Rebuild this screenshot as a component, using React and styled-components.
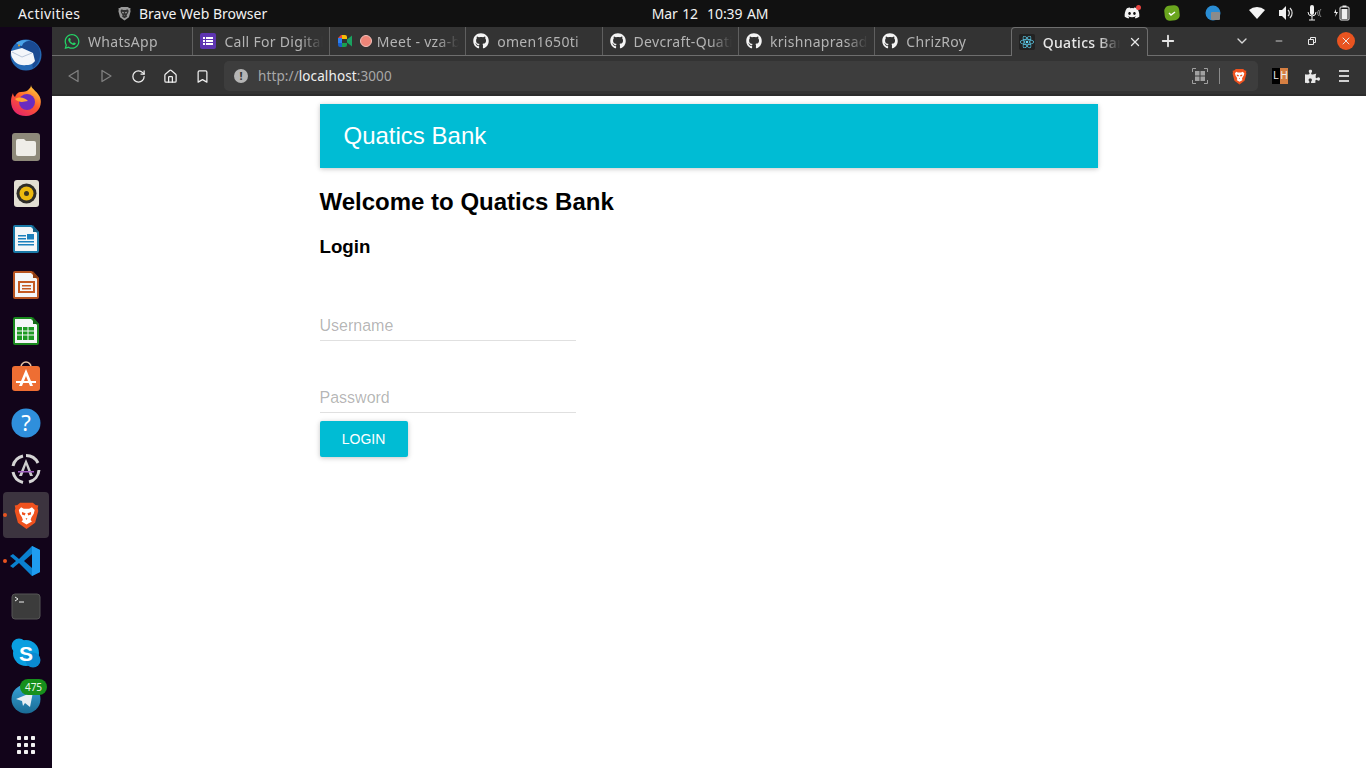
import React from "react";
import styled, { createGlobalStyle } from "styled-components";
import { FaGithub, FaWhatsapp, FaDiscord, FaReact, FaPuzzlePiece } from "react-icons/fa";
import { X, Plus, ChevronDown, Minus, RotateCw, Home, Bookmark } from "lucide-react";

const Global = createGlobalStyle`
  * { box-sizing: border-box; }
  html, body { margin: 0; padding: 0; height: 100%; overflow: hidden; background: #fff; }
  #root { height: 768px; }
`;
const uiFont = `"Noto Sans", "DejaVu Sans", sans-serif`;
const webFont = `"Liberation Sans", Arial, sans-serif`;

const Screen = styled.div`
  width: 1366px; height: 768px; display: grid; grid-template-rows: 27px 1fr; font-family: ${uiFont};
`;
const TopBar = styled.header`
  display: grid; grid-template-columns: 1fr auto 1fr; align-items: center; background: #111111; color: #f2f2f2;
  font-size: 14px; padding: 0 0 1px 18px;
`;
const TopLeft = styled.div`display: flex; align-items: center;`;
const Activities = styled.span`width: 99px; font-size: 14px; letter-spacing: 0.4px;`;
const AppName = styled.span`display: flex; align-items: center; gap: 7px; font-size: 14px;`;
const Clock = styled.div`font-size: 14px; letter-spacing: -0.1px; word-spacing: 1px; margin-left: 36px;`;
const Tray = styled.div`display: flex; align-items: center; justify-content: flex-end; height: 100%; padding-right: 16px;`;
const TraySlot = styled.span`
  position: relative; display: flex; justify-content: center; align-items: center;
  width: ${p => p.$w}px; margin-left: ${p => p.$ml || 0}px;
`;
const TrayDot = styled.i`
  position: absolute; right: -1px; top: 0; width: 5px; height: 5px; border-radius: 50%; background: #e8433f;
`;

const Body = styled.div`display: grid; grid-template-columns: 52px 1fr; min-height: 0;`;
const Dock = styled.nav`
  background: #12041a; display: flex; flex-direction: column; padding-top: 5px;
`;
const DockItem = styled.div`
  position: relative; height: 46px; width: 46px; margin-left: 3px; border-radius: 4px;
  display: flex; align-items: center; justify-content: center;
  background: ${p => (p.$active ? "#3c343f" : "transparent")};
`;
const RunDot = styled.i`
  position: absolute; left: 0; top: 21px; width: 4px; height: 4px; border-radius: 50%; background: #e95420;
`;
const Badge = styled.span`
  position: absolute; left: 17px; top: 3px; width: 27px; height: 16px; border-radius: 8px; background: #17901c; color: #e9f7e9;
  font-size: 10px; line-height: 16px; text-align: center;
`;

const Browser = styled.div`display: flex; flex-direction: column; min-width: 0;`;
const TabStrip = styled.div`
  position: relative; height: 29px; background: #333333; display: flex; align-items: stretch; padding-left: 5px;
  border-bottom: 1px solid #6e6e6e;
`;
const Tab = styled.div`
  position: relative; width: 136.4px; height: 28px; padding: 0 6px 0 7px; display: flex; align-items: center; gap: 8px;
  color: #b4b4b4; font-size: 14px; flex: none;
  border-right: ${p => (p.$sep ? "1px solid #5f5f5f" : "0")};
`;
const ActiveTab = styled(Tab)`
  background: #333333; height: 29px; color: #e8e8e8; font-weight: 500; border: 1px solid #6e6e6e; border-bottom: 0;
  border-radius: 4px 4px 0 0; padding: 0 5px 0 7px; width: 137px; margin-left: -1px; z-index: 1;
`;
const TabTitle = styled.span`
  flex: 1; min-width: 0; overflow: hidden; white-space: nowrap; letter-spacing: 0.3px;
  -webkit-mask-image: linear-gradient(to right, #000 calc(100% - 22px), transparent);
  mask-image: linear-gradient(to right, #000 calc(100% - 22px), transparent);
`;
const FavFrame = styled.span`
  width: 16px; height: 16px; flex: none; display: flex; align-items: center; justify-content: center; background: ${p => p.$bg || "transparent"}; border-radius: 2px;
`;
const RecDot = styled.span`
  width: 12px; height: 12px; flex: none; border-radius: 50%; background: #ee8578; border: 1px solid #f5c3bc; margin: 0 -3px 0 -1px;
`;
const StripTools = styled.div`
  flex: 1; display: flex; align-items: center; color: #e6e6e6; padding-left: 11px;
`;
const ChevronSlot = styled.span`display: flex; margin-left: 57px; color: #d8d8d8;`;
const WinBtn = styled.span`
  width: 18px; height: 18px; display: flex; align-items: center; justify-content: center; margin-left: ${p => p.$ml}px; border-radius: 50%;
  background: ${p => p.$bg || "transparent"}; color: #e8e8e8;
`;

const Toolbar = styled.div`
  height: 40px; background: #333333; display: flex; align-items: center; padding: 2px 0 0 6px;
  border-bottom: 2px solid #2c2c2c;
`;
const NavBtn = styled.span`
  width: 32px; height: 24px; display: flex; align-items: center; justify-content: center; color: ${p => (p.$off ? "#808080" : "#eeeeee")};
`;
const Omnibox = styled.div`
  width: 1034px; height: 30px; margin-left: 6px; background: #3d3d3d; border-radius: 5px; display: flex; align-items: center; padding: 0 10px 0 10px;
  font-size: 13.5px; color: #a8a8a8; letter-spacing: 0.1px;
`;
const InfoDot = styled.span`
  width: 14px; height: 14px; border-radius: 50%; background: #b5b5b5; color: #333; font-size: 11px; font-weight: 700; line-height: 14px; text-align: center; margin-right: 10px; flex: none;
`;
const Host = styled.b`color: #efefef; font-weight: 400;`;
const OmniEnd = styled.div`margin-left: auto; display: flex; align-items: center; gap: 11px;`;
const VSep = styled.span`width: 1px; height: 16px; background: #8a8a8a;`;
const ExtArea = styled.div`display: flex; align-items: center; margin-left: 14px;`;
const LhBadge = styled.span`
  display: flex; width: 16px; height: 16px; font-size: 10px; line-height: 16px; text-align: center; color: #eee; font-family: ${webFont};
`;
const LhPart = styled.span`width: 50%; background: ${p => p.$bg};`;
const ExtBtn = styled.span`display: flex; width: 32px; justify-content: center; color: #e8e8e8;`;
const PuzzleBtn = styled(ExtBtn)`margin-left: 8px;`;

const Page = styled.main`flex: 1; background: #fff; padding-top: 8px; font-family: ${webFont}; color: #000;`;
const Container = styled.div`width: 779px; margin: 0 auto;`;
const AppBar = styled.div`
  width: 778px; height: 64px; background: #00bcd4; color: #fff; display: flex; align-items: center; padding: 0 24px; font-size: 24px;
  box-shadow: rgba(0,0,0,.12) 0 1px 6px, rgba(0,0,0,.12) 0 1px 4px;
`;
const Heading = styled.h2`margin: 19px 0 0; font-size: 24px; line-height: 29px; font-weight: 700;`;
const SubHeading = styled.h3`margin: 20px 0 0; font-size: 18.72px; line-height: 22px; font-weight: 700;`;
const Form = styled.form`display: flex; flex-direction: column; align-items: flex-start;`;
const Field = styled.div`margin-top: ${p => p.$mt}px; width: 256px; border-bottom: 1px solid #e0e0e0; height: 29px;`;
const Input = styled.input`
  width: 100%; height: 28px; border: 0; outline: 0; padding: 0; background: transparent; font: 16px ${webFont}; color: #000;
  &::placeholder { color: rgba(0,0,0,.3); opacity: 1; }
`;
const LoginBtn = styled.button`
  margin-top: 8px; width: 88px; height: 36px; border: 0; border-radius: 2px; background: #00bcd4; color: #fff; font: 14px ${webFont}; text-transform: uppercase; padding: 0;
  box-shadow: rgba(0,0,0,.12) 0 1px 6px, rgba(0,0,0,.12) 0 1px 4px;
`;

const Svg = ({ s = 32, v = "0 0 32 32", children }) => <svg width={s} height={s} viewBox={v}>{children}</svg>;

const BraveShield = ({ s = 28, body = "#f0521e", face = "#fff" }) => (
  <Svg s={s} v="0 0 32 32">
    <path d="M9 2h14l3 2.500 3 .5-.7 3 .7 3-3.500 13L16 31 6.500 24 3 11l.7-3L3 5l3-.5z" fill={body}/>
    <path d="M10 7l3 1.500h6L22 7l3 3-1 4-2.500 4-1 3 1.500 1.500L16 26l-5.500-3.500L12 21l-1-3-2.500-4-1-4z" fill={face}/>
    <path d="M11 12l4 1.500-1 2.500-3-1zM21 12l-4 1.500 1 2.500 3-1zM15 19h2l-1 2z" fill={body}/>
  </Svg>
);

const Thunderbird = () => <Svg><circle cx="16" cy="16" r="15.500" fill="#2468b4"/><path d="M7 5a15 15 0 0 1 21 2c4 7 2 17-5 22-2-3 2-9 0-13-2-5-8-5-12-7z" fill="#1a4a92"/><path d="M6 4c4-3 9-4 14-2-5 0-7 2-8 5-2 0-4-1-6-3z" fill="#4aa3e8"/><path d="M1 12l11-3 11 5 2 8c-3 4-6 4-9 4-6 1-11-2-13-6-2-2-2-5-2-8z" fill="#f4f6fa"/><path d="M2 13l10 5 10-4" fill="none" stroke="#b9c6da"/><circle cx="9" cy="6.500" r="1" fill="#e8a020"/></Svg>;
const Firefox = () => <Svg><defs><linearGradient id="ff" x1="0.800" y1="0" x2="0.200" y2="1"><stop offset="0" stopColor="#ffd43a"/><stop offset=".5" stopColor="#ff5a2c"/><stop offset="1" stopColor="#e3206e"/></linearGradient></defs><path d="M21 0c0 4 8 7 9.500 14 2 9-5 17-14.500 17S1 25 1 16c0-3 1-6 2-8 0 2 1 3 2 4 1-3 3-5 6-5 4 0 7-1 8-3 1-1 2-2 2-4z" fill="url(#ff)"/><circle cx="17" cy="17" r="8" fill="#6a2cc0"/><path d="M5 14c5-3 10-1 13 2-5 1-9 2-13-2z" fill="#ffa436"/></Svg>;
const Files = () => <Svg><rect x="2" y="2" width="28" height="28" rx="3" fill="#8e897a"/><path d="M6 10a2 2 0 0 1 2-2h6l2 2h8a2 2 0 0 1 2 2v11a2 2 0 0 1-2 2H8a2 2 0 0 1-2-2z" fill="#efede8"/></Svg>;
const Rhythmbox = () => <Svg><rect x="4" y="3" width="25" height="27" rx="3" fill="#e3dfd3"/><circle cx="16.500" cy="16.500" r="10" fill="#2f2d28"/><circle cx="16.500" cy="16.500" r="7" fill="#ecb90f"/><circle cx="16.500" cy="16.500" r="2.500" fill="#3b3522"/></Svg>;
const Office = ({ c, d, children }) => <Svg><path d="M5 2h17l7 7v19a2 2 0 0 1-2 2H5a2 2 0 0 1-2-2V4a2 2 0 0 1 2-2z" fill={c}/><path d="M5 4h16l6 6v18H5z" fill="#f4f6f8"/><path d="M23 2l6 7h-6z" fill={d}/>{children}</Svg>;
const Writer = () => <Office c="#1a7aa8" d="#125c82"><rect x="8" y="12" width="8" height="1.500" fill="#1b80bd"/><rect x="8" y="15" width="8" height="1.500" fill="#1b80bd"/><rect x="8" y="18" width="16" height="1.500" fill="#1b80bd"/><rect x="8" y="21" width="16" height="1.500" fill="#1b80bd"/><rect x="17" y="11" width="7" height="5.500" fill="#1b80bd"/></Office>;
const Impress = () => <Office c="#b7531f" d="#8e3e14"><rect x="9" y="13" width="15" height="10" fill="none" stroke="#c45a22" strokeWidth="2"/><rect x="12" y="16" width="9" height="1.500" fill="#c45a22"/><rect x="12" y="19" width="9" height="1.500" fill="#c45a22"/></Office>;
const Calc = () => <Office c="#1a8a1e" d="#146a17"><rect x="7" y="12" width="17" height="13" fill="#1c9a22"/><path d="M7 16h17M7 20h17M12.500 12v13M18 12v13" stroke="#f4f6f8"/></Office>;
const Software = () => <Svg><path d="M11 6a5 5 0 0 1 10 0" fill="none" stroke="#e8c4a6" strokeWidth="1.500"/><rect x="2" y="5" width="28" height="25" rx="3" fill="#ee6e33"/><path d="M16 8l7 17h-3l-4-10-4 10H9z" fill="#fff"/><rect x="6" y="20" width="20" height="2" fill="#fff"/></Svg>;
const Help = () => <Svg><circle cx="16" cy="16" r="14.500" fill="#2f8fdc"/><text x="16" y="24" textAnchor="middle" fontSize="22" fill="#fff" fontFamily="Noto Sans">?</text></Svg>;
const Updater = () => <Svg><path d="M16 2.500a13.500 13.500 0 0 1 12 7.500M29 17a13.500 13.500 0 0 1-10 12M13 29.500A13.500 13.500 0 0 1 3 19M3 13A13.500 13.500 0 0 1 13 3" fill="none" stroke="#d5d5d5" strokeWidth="3"/><path d="M16 6l7 17h-3l-4-11-4 11H9z" fill="#ccc"/><rect x="8" y="18" width="16" height="1.500" fill="#a060c0"/></Svg>;
const VSCode = () => <Svg><path d="M22 1l8 4v22l-8 4L9 18l-6 5-3-2 6-5-6-5 3-2 6 5z" fill="#0a80cf"/><path d="M22 1l8 4v22l-8 4z" fill="#1f9cf0"/><path d="M22 9l-8 7 8 7z" fill="#12041a"/></Svg>;
const Terminal = () => <Svg><rect x="2" y="3" width="28" height="25" rx="3" fill="#3c3c3c" stroke="#555"/><path d="M5 6l3 2-3 2M9 11h5" fill="none" stroke="#eee"/></Svg>;
const SkypeS = styled.text`font: 700 21px ${webFont}; fill: #fff;`;
const Skype = () => <Svg><circle cx="16" cy="16" r="13" fill="#0a9fe0"/><circle cx="9" cy="9" r="7.500" fill="#0a9fe0"/><circle cx="23" cy="23" r="7.500" fill="#0a8ad0"/><SkypeS x="16" y="23.500" textAnchor="middle">S</SkypeS></Svg>;
const Telegram = () => <Svg><defs><linearGradient id="tg" x1="0" y1="0" x2="0" y2="1"><stop offset="0" stopColor="#37a3d8"/><stop offset="1" stopColor="#1a6b94"/></linearGradient></defs><circle cx="16" cy="16" r="14.500" fill="url(#tg)"/><path d="M6 16l17-7-3 15-5-4-2 3-1-5z" fill="#e8eef2"/></Svg>;
const Grid9 = () => <Svg s={20} v="0 0 20 20"><g fill="#f2f2f2">{[1, 8, 15].flatMap(y => [1, 8, 15].map(x => <rect key={x + "-" + y} x={x} y={y} width="4" height="4" rx=".8"/>))}</g></Svg>;
const FormsIcon = () => <Svg s={16} v="0 0 16 16"><rect width="16" height="16" rx="2" fill="#5e35b1"/><g fill="#fff"><rect x="3" y="4" width="2" height="2"/><rect x="6" y="4" width="7" height="2"/><rect x="3" y="7" width="2" height="2"/><rect x="6" y="7" width="7" height="2"/><rect x="3" y="10" width="2" height="2"/><rect x="6" y="10" width="7" height="2"/></g></Svg>;
const MeetIcon = () => <Svg s={16} v="0 0 16 16"><path d="M1 5l3-3h1v3z" fill="#e8453c"/><path d="M1 5h4v5H1z" fill="#2d7ff0"/><path d="M1 10h4v4H3a2 2 0 0 1-2-2z" fill="#1a5fc8"/><path d="M5 10h5v2a2 2 0 0 1-2 2H5z" fill="#18a050"/><path d="M10 6.500l5-4v11l-5-4z" fill="#1aa260"/><path d="M5 2h3a2 2 0 0 1 2 2v2H5z" fill="#f9bc05"/></Svg>;
const WifiIcon = () => <Svg s={16} v="0 0 16 16"><path d="M0 5a12 12 0 0 1 16 0L8 14z" fill="#f4f4f4"/></Svg>;
const SoundIcon = () => <Svg s={16} v="0 0 16 16"><path d="M1 5h3l4-4v14l-4-4H1z" fill="#f0f0f0"/><path d="M10 5a4 4 0 0 1 0 6M12 3a7 7 0 0 1 0 10" fill="none" stroke="#e0e0e0" strokeWidth="1.200"/></Svg>;
const MicIcon = () => <Svg s={20} v="0 0 20 16"><rect x="4" y="0" width="4" height="10" rx="2" fill="#f0f0f0"/><path d="M2 7a4 4 0 0 0 8 0M6 11v4M3 15h6" fill="none" stroke="#eee"/><path d="M13 5a4 4 0 0 0 0 6M15 4a6 6 0 0 0 0 8" fill="none" stroke="#888"/></Svg>;
const BatteryIcon = () => <Svg s={16} v="0 0 16 16"><path d="M2 4L0 8h2l-1 4 3-5H2z" fill="#eee"/><rect x="6" y="2" width="9" height="13" rx="1" fill="none" stroke="#eee"/><rect x="8.500" y="0.500" width="4" height="1.500" fill="#eee"/><rect x="7.500" y="4" width="6" height="10" fill="#eee"/></Svg>;
const Shield = () => <Svg s={16} v="0 0 16 16"><rect x="0.500" y="0.500" width="15" height="15" rx="5" transform="rotate(-6 8 8)" fill="#6aa51e"/><path d="M5 8l2 2 4-3" fill="none" stroke="#fff" strokeWidth="1.400"/></Svg>;
const Updates = () => <Svg s={16} v="0 0 16 16"><circle cx="8" cy="8" r="7.500" fill="#2a8dd4"/><rect x="6" y="7" width="9" height="8" rx="1" fill="#8b8b8b"/></Svg>;
const QrIcon = () => <Svg s={16} v="0 0 16 16"><path d="M.500 4V.500h3.500M12 .500h3.500V4M15.500 12v3.500H12M4 15.500H.500V12" fill="none" stroke="#a0a0a0"/><g fill="#a0a0a0"><rect x="3" y="3" width="4.500" height="4.500"/><rect x="8.500" y="3" width="4.500" height="4.500"/><rect x="3" y="8.500" width="4.500" height="4.500"/><rect x="8.500" y="8.500" width="4.500" height="4.500"/></g></Svg>;
const RestoreIcon = () => <Svg s={10} v="0 0 10 10"><path d="M1.500 3.500h5v5h-5zM3.500 3.500v-2h5v5h-2" fill="none" stroke="#e8e8e8"/></Svg>;
const TriLeft = () => <Svg s={16} v="0 0 16 16"><path d="M12 2.500L3 8l9 5.500z" fill="none" stroke="currentColor" strokeWidth="1.300" strokeLinejoin="round"/></Svg>;
const TriRight = () => <Svg s={16} v="0 0 16 16"><path d="M4 2.500L13 8l-9 5.500z" fill="none" stroke="currentColor" strokeWidth="1.300" strokeLinejoin="round"/></Svg>;
const HamburgerIcon = () => <Svg s={14} v="0 0 14 14"><path d="M2 2h10M2 7h10M2 12h10" stroke="#d0d0d0" strokeWidth="2"/></Svg>;

const dock = [Thunderbird, Firefox, Files, Rhythmbox, Writer, Impress, Calc, Software, Help, Updater];
const gh = <FaGithub size={16} color="#f4f4f4"/>;
const tabs = [
  { title: "WhatsApp", icon: <FaWhatsapp size={17} color="#25d366"/> },
  { title: "Call For Digital Volunteers", icon: <FormsIcon/> },
  { title: "Meet - vza-bnxt-yvu", icon: <MeetIcon/>, rec: true },
  { title: "omen1650ti", icon: gh },
  { title: "Devcraft-Quatics", icon: gh },
  { title: "krishnaprasadbhat", icon: gh },
  { title: "ChrizRoy", icon: gh, last: true },
];

export default function App() {
  return (
    <>
      <Global/>
      <Screen>
        <TopBar>
          <TopLeft>
            <Activities>Activities</Activities>
            <AppName><BraveShield s={15} body="#9a9a9a" face="#333"/>Brave Web Browser</AppName>
          </TopLeft>
          <Clock>Mar 12&nbsp; 10:39 AM</Clock>
          <Tray>
            <TraySlot $w={16}><FaDiscord size={16}/><TrayDot/></TraySlot>
            <TraySlot $w={16} $ml={24}><Shield/></TraySlot>
            <TraySlot $w={16} $ml={25}><Updates/></TraySlot>
            <TraySlot $w={16} $ml={28}><WifiIcon/></TraySlot>
            <TraySlot $w={16} $ml={13}><SoundIcon/></TraySlot>
            <TraySlot $w={20} $ml={12}><MicIcon/></TraySlot>
            <TraySlot $w={16} $ml={8}><BatteryIcon/></TraySlot>
          </Tray>
        </TopBar>
        <Body>
          <Dock>
            {dock.map((Icon, i) => <DockItem key={i}><Icon/></DockItem>)}
            <DockItem $active><RunDot/><BraveShield s={29}/></DockItem>
            <DockItem><RunDot/><VSCode/></DockItem>
            <DockItem><Terminal/></DockItem>
            <DockItem><Skype/></DockItem>
            <DockItem><Telegram/><Badge>475</Badge></DockItem>
            <DockItem><Grid9/></DockItem>
          </Dock>
          <Browser>
            <TabStrip>
              {tabs.map(t => (
                <Tab key={t.title} $sep={!t.last}>
                  <FavFrame>{t.icon}</FavFrame>
                  {t.rec && <RecDot/>}
                  <TabTitle>{t.title}</TabTitle>
                </Tab>
              ))}
              <ActiveTab>
                <FavFrame $bg="#222"><FaReact size={14} color="#61dafb"/></FavFrame>
                <TabTitle>Quatics Bank</TabTitle>
                <X size={14} strokeWidth={2.2}/>
              </ActiveTab>
              <StripTools>
                <Plus size={18} strokeWidth={2.4}/>
                <ChevronSlot><ChevronDown size={16}/></ChevronSlot>
                <WinBtn $ml={20}><Minus size={10}/></WinBtn>
                <WinBtn $ml={15}><RestoreIcon/></WinBtn>
                <WinBtn $ml={16} $bg="#e95420"><X size={12} strokeWidth={2}/></WinBtn>
              </StripTools>
            </TabStrip>
            <Toolbar>
              <NavBtn $off><TriLeft/></NavBtn>
              <NavBtn $off><TriRight/></NavBtn>
              <NavBtn><RotateCw size={15} strokeWidth={2}/></NavBtn>
              <NavBtn><Home size={15} strokeWidth={2}/></NavBtn>
              <NavBtn><Bookmark size={15} strokeWidth={2}/></NavBtn>
              <Omnibox>
                <InfoDot>!</InfoDot>
                <span>http://<Host>localhost</Host>:3000</span>
                <OmniEnd>
                  <QrIcon/>
                  <VSep/>
                  <BraveShield s={17}/>
                </OmniEnd>
              </Omnibox>
              <ExtArea>
                <LhBadge><LhPart $bg="#000">L</LhPart><LhPart $bg="#d67f42">H</LhPart></LhBadge>
                <PuzzleBtn><FaPuzzlePiece size={15}/></PuzzleBtn>
                <ExtBtn><HamburgerIcon/></ExtBtn>
              </ExtArea>
            </Toolbar>
            <Page>
              <Container>
                <AppBar>Quatics Bank</AppBar>
                <Heading>Welcome to Quatics Bank</Heading>
                <SubHeading>Login</SubHeading>
                <Form onSubmit={e => e.preventDefault()}>
                  <Field $mt={54}><Input placeholder="Username"/></Field>
                  <Field $mt={43}><Input placeholder="Password" type="password"/></Field>
                  <LoginBtn>Login</LoginBtn>
                </Form>
              </Container>
            </Page>
          </Browser>
        </Body>
      </Screen>
    </>
  );
}
